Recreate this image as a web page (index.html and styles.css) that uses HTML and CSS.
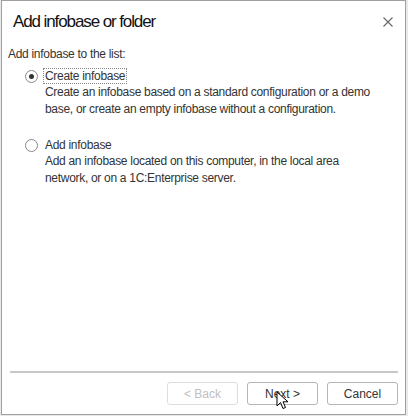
FILE: index.html
```html
<!DOCTYPE html>
<html lang="en">
<head>
  <meta charset="UTF-8" />
  <title>Add infobase or folder</title>
  <link rel="stylesheet" href="styles.css">
</head>
<body>
  <div class="dialog">
    <header class="title-bar">
      <h1>Add infobase or folder</h1>
      <span class="close">
        <svg width="10" height="10" viewBox="0 0 10 10"><path d="M0.5 0.5L9.5 9.5M9.5 0.5L0.5 9.5" stroke="#666" stroke-width="1.1"/></svg>
      </span>
    </header>
    <main class="content">
      <p class="lead">Add infobase to the list:</p>
      <div class="option">
        <label class="radio-row">
          <span class="radio checked"></span>
          <span class="caption focused">Create infobase</span>
        </label>
        <p class="desc">Create an infobase based on a standard configuration or a demo base, or create an empty infobase without a configuration.</p>
      </div>
      <div class="option">
        <label class="radio-row">
          <span class="radio"></span>
          <span class="caption">Add infobase</span>
        </label>
        <p class="desc">Add an infobase located on this computer, in the local area network, or on a 1C:Enterprise server.</p>
      </div>
    </main>
    <footer class="buttons">
      <button disabled>&lt; Back</button>
      <button class="next">Next &gt;
        <svg class="cursor" width="14" height="20" viewBox="0 0 14 20"><path d="M1 1L1 15L4.5 11.5L7 17.5L9.5 16.5L7 10.8L12 10.8Z" fill="#fff" stroke="#000" stroke-width="1"/></svg>
      </button>
      <button>Cancel</button>
    </footer>
  </div>
</body>
</html>
```

FILE: styles.css
```css
* {
  box-sizing: border-box;
}
body {
  margin: 0;
  font-family: "Liberation Sans", Arial, sans-serif;
  background: #e9e9e9;
  height: 416px;
  overflow: hidden;
}
.dialog {
  width: 405px;
  height: 415px;
  margin: 0 0 0 1px;
  background: #fff;
  border: 1px solid #a0a0a0;
  display: flex;
  flex-direction: column;
}
.title-bar {
  display: flex;
  align-items: center;
  justify-content: space-between;
  padding: 4px 10px 0 11px;
  height: 38px;
}
.title-bar h1 {
  margin: 0;
  font-weight: normal;
  font-size: 17px;
  letter-spacing: -1.1px;
  color: #111;
}
.close {
  display: flex;
  margin-right: 2px;
}
.content {
  flex: 1;
  padding: 8px 6px 0 6px;
  font-size: 12px;
  letter-spacing: -0.3px;
  color: #333;
}
.lead {
  margin: 0 0 7px;
}
.option {
  padding-left: 17px;
  margin-bottom: 19px;
}
.radio-row {
  display: flex;
  align-items: center;
  gap: 5px;
}
.radio {
  width: 13px;
  height: 13px;
  border: 1px solid #8a8a8a;
  border-radius: 50%;
  display: flex;
  align-items: center;
  justify-content: center;
}
.radio.checked::after {
  content: "";
  width: 5px;
  height: 5px;
  border-radius: 50%;
  background: #333;
}
.caption {
  padding: 0 1px;
  border: 1px dotted transparent;
}
.caption.focused {
  border-color: #888;
}
.desc {
  max-width: 332px;
  margin: 0 0 0 20px;
  line-height: 17px;
}
.buttons {
  margin: 0 7px 0 8px;
  border-top: 2px solid #c8c8c8;
  display: flex;
  justify-content: flex-end;
  gap: 9px;
  padding: 9px 0 9px;
}
button {
  position: relative;
  width: 71px;
  height: 23px;
  font-family: inherit;
  font-size: 12px;
  color: #333;
  background: #fff;
  border: 1px solid #b5b5b5;
  border-radius: 3px;
}
button:disabled {
  color: #c0c0c0;
  border-color: #dedede;
}
.cursor {
  position: absolute;
  left: 28px;
  top: 8px;
}
```
